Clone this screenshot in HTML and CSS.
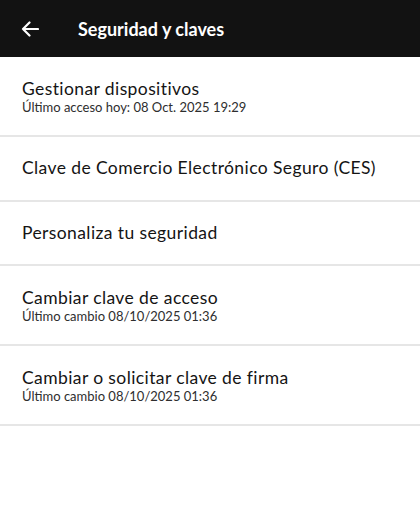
FILE: index.html
```html
<!DOCTYPE html>
<html lang="es">
<head>
    <meta charset="UTF-8">
    <meta name="viewport" content="width=device-width, initial-scale=1.0">
    <title>Seguridad y claves</title>
    <link rel="stylesheet" href="styles.css">
</head>
<body>
    <div id="header">
        <div class="back">
            <svg width="18" height="16" viewBox="0 0 18 16">
                <path d="M17 8H2M8.5 1.5L2 8l6.5 6.5" fill="none" stroke="#fff" stroke-width="2.2" stroke-linecap="round" stroke-linejoin="round"/>
            </svg>
        </div>
        <h1>Seguridad y claves</h1>
    </div>
    <ul id="menu">
        <li class="double">
            <span class="title">Gestionar dispositivos</span>
            <span class="sub">Último acceso hoy: 08 Oct. 2025 19:29</span>
        </li>
        <li>
            <span class="title">Clave de Comercio Electrónico Seguro (CES)</span>
        </li>
        <li>
            <span class="title">Personaliza tu seguridad</span>
        </li>
        <li class="double">
            <span class="title">Cambiar clave de acceso</span>
            <span class="sub">Último cambio 08/10/2025 01:36</span>
        </li>
        <li class="double">
            <span class="title">Cambiar o solicitar clave de firma</span>
            <span class="sub">Último cambio 08/10/2025 01:36</span>
        </li>
    </ul>
</body>
</html>
```

FILE: styles.css
```css
body{
    margin: 0;
    background-color: white;
    font-family: "Lato", "Liberation Sans", sans-serif;
    color: #141414;
}
#header{
    height: 57px;
    background-color: #121212;
    display: flex;
    align-items: center;
}
.back{
    width: 78px;
    padding-left: 21px;
    box-sizing: border-box;
    display: flex;
    align-items: center;
}
#header h1{
    margin: 0;
    color: white;
    font-size: 18px;
    font-weight: bold;
}
#menu{
    list-style: none;
    margin: 0;
    padding: 0;
}
#menu li{
    height: 62.5px;
    border-bottom: 2px solid #e6e6e6;
    padding: 0 22px;
    display: flex;
    flex-direction: column;
    justify-content: center;
}
#menu li.double{
    height: 78px;
}
.title{
    font-size: 17.5px;
    line-height: 22px;
    letter-spacing: 0.4px;
}
.sub{
    font-size: 13px;
    line-height: 15px;
    color: #2e2e2e;
}
```
